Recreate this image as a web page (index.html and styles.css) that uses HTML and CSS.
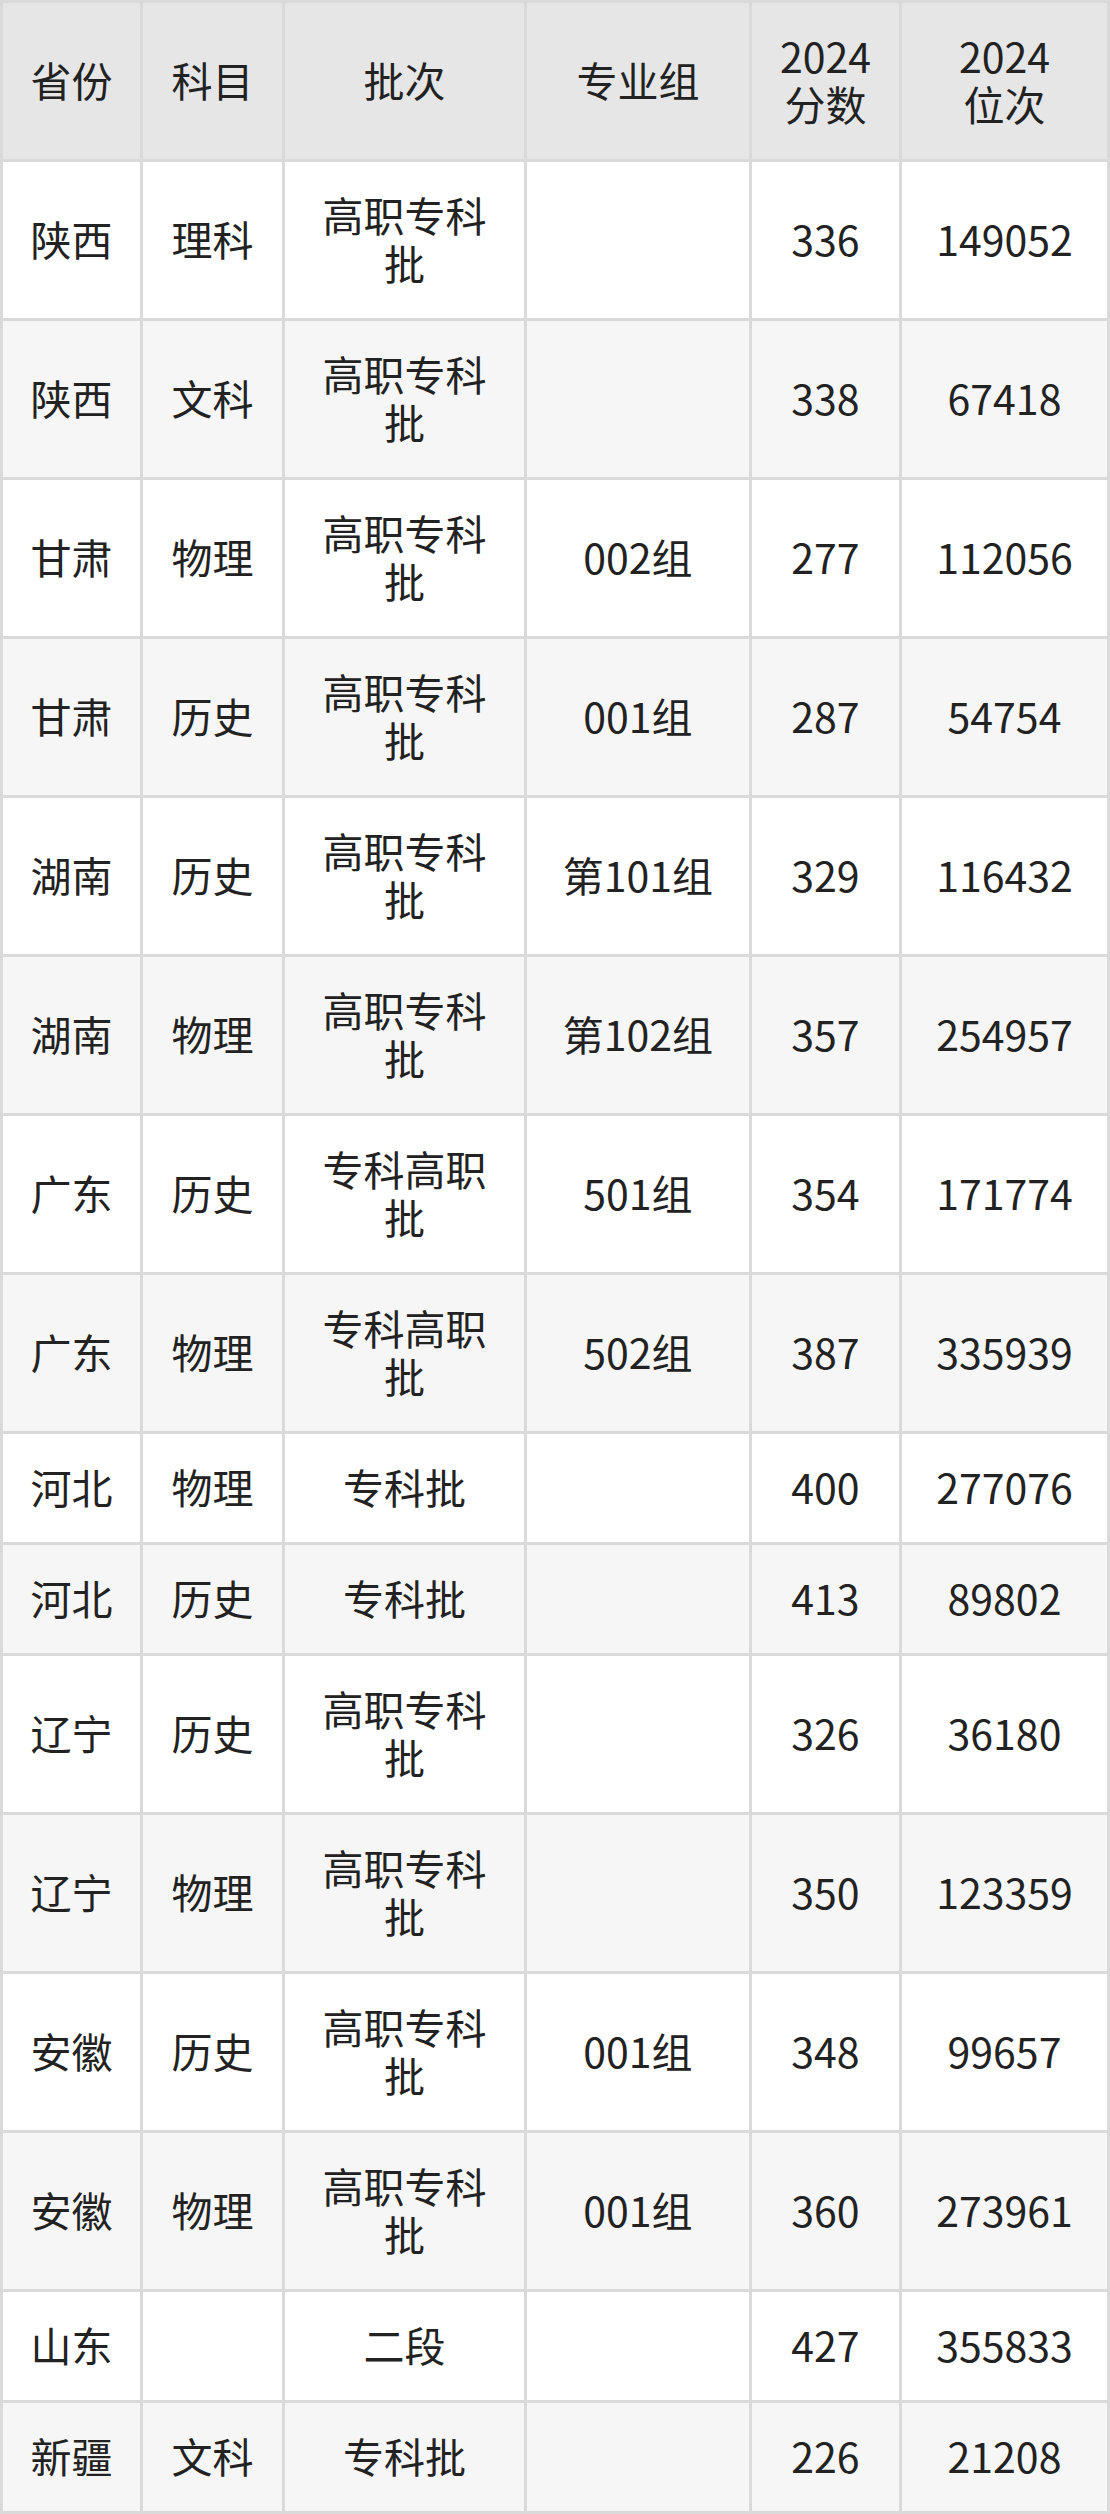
FILE: index.html
```html
<!DOCTYPE html>
<html lang="zh-CN">
<head>
<meta charset="utf-8">
<title>2024 分数位次</title>
<link rel="stylesheet" href="styles.css">
</head>
<body>
<div class="table">
  <div class="row head">
    <div class="cell">省份</div><div class="cell">科目</div><div class="cell">批次</div><div class="cell">专业组</div><div class="cell">2024<br>分数</div><div class="cell">2024<br>位次</div>
  </div>
  <div class="row tall odd">
    <div class="cell">陕西</div><div class="cell">理科</div><div class="cell">高职专科<br>批</div><div class="cell"></div><div class="cell">336</div><div class="cell">149052</div>
  </div>
  <div class="row tall even">
    <div class="cell">陕西</div><div class="cell">文科</div><div class="cell">高职专科<br>批</div><div class="cell"></div><div class="cell">338</div><div class="cell">67418</div>
  </div>
  <div class="row tall odd">
    <div class="cell">甘肃</div><div class="cell">物理</div><div class="cell">高职专科<br>批</div><div class="cell">002组</div><div class="cell">277</div><div class="cell">112056</div>
  </div>
  <div class="row tall even">
    <div class="cell">甘肃</div><div class="cell">历史</div><div class="cell">高职专科<br>批</div><div class="cell">001组</div><div class="cell">287</div><div class="cell">54754</div>
  </div>
  <div class="row tall odd">
    <div class="cell">湖南</div><div class="cell">历史</div><div class="cell">高职专科<br>批</div><div class="cell">第101组</div><div class="cell">329</div><div class="cell">116432</div>
  </div>
  <div class="row tall even">
    <div class="cell">湖南</div><div class="cell">物理</div><div class="cell">高职专科<br>批</div><div class="cell">第102组</div><div class="cell">357</div><div class="cell">254957</div>
  </div>
  <div class="row tall odd">
    <div class="cell">广东</div><div class="cell">历史</div><div class="cell">专科高职<br>批</div><div class="cell">501组</div><div class="cell">354</div><div class="cell">171774</div>
  </div>
  <div class="row tall even">
    <div class="cell">广东</div><div class="cell">物理</div><div class="cell">专科高职<br>批</div><div class="cell">502组</div><div class="cell">387</div><div class="cell">335939</div>
  </div>
  <div class="row short odd">
    <div class="cell">河北</div><div class="cell">物理</div><div class="cell">专科批</div><div class="cell"></div><div class="cell">400</div><div class="cell">277076</div>
  </div>
  <div class="row short even">
    <div class="cell">河北</div><div class="cell">历史</div><div class="cell">专科批</div><div class="cell"></div><div class="cell">413</div><div class="cell">89802</div>
  </div>
  <div class="row tall odd">
    <div class="cell">辽宁</div><div class="cell">历史</div><div class="cell">高职专科<br>批</div><div class="cell"></div><div class="cell">326</div><div class="cell">36180</div>
  </div>
  <div class="row tall even">
    <div class="cell">辽宁</div><div class="cell">物理</div><div class="cell">高职专科<br>批</div><div class="cell"></div><div class="cell">350</div><div class="cell">123359</div>
  </div>
  <div class="row tall odd">
    <div class="cell">安徽</div><div class="cell">历史</div><div class="cell">高职专科<br>批</div><div class="cell">001组</div><div class="cell">348</div><div class="cell">99657</div>
  </div>
  <div class="row tall even">
    <div class="cell">安徽</div><div class="cell">物理</div><div class="cell">高职专科<br>批</div><div class="cell">001组</div><div class="cell">360</div><div class="cell">273961</div>
  </div>
  <div class="row short odd">
    <div class="cell">山东</div><div class="cell"></div><div class="cell">二段</div><div class="cell"></div><div class="cell">427</div><div class="cell">355833</div>
  </div>
  <div class="row short even">
    <div class="cell">新疆</div><div class="cell">文科</div><div class="cell">专科批</div><div class="cell"></div><div class="cell">226</div><div class="cell">21208</div>
  </div>
</div>
</body>
</html>
```
FILE: styles.css
```css
html, body {
  margin: 0;
  padding: 0;
  background: #ffffff;
}

body {
  width: 1110px;
  font-family: "Noto Sans CJK SC", "Noto Sans", sans-serif;
  color: #222222;
}

.table {
  display: flex;
  flex-direction: column;
  gap: 3px;
  padding: 3px;
  background: #dadada;
  width: 1110px;
  box-sizing: border-box;
}

.row {
  display: grid;
  grid-template-columns: 137px 139px 239px 222px 147px 205px;
  gap: 3px;
}

.head { height: 156px; }
.tall { height: 156px; }
.short { height: 108px; }

.cell {
  display: flex;
  align-items: center;
  justify-content: center;
  text-align: center;
  font-size: 41px;
  line-height: 48px;
  padding-bottom: 5px;
  box-sizing: border-box;
}

.head .cell { background: #e6e6e6; }
.odd .cell { background: #ffffff; }
.even .cell { background: #f6f6f6; }
```
